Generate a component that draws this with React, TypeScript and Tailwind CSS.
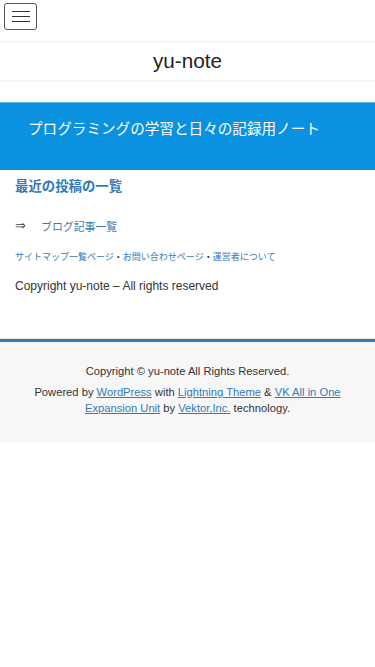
import React from "react";

const font = '"Liberation Sans", Arial, sans-serif';
const cjk = '"Noto Sans CJK JP", "Liberation Sans", sans-serif';

export default function App() {
  return (
    <div className="min-h-[667px] bg-white text-[#333]" style={{ fontFamily: font }}>
      {/* top bar with menu button */}
      <div className="h-[41px] pt-[3px] pl-[4px]">
        <button className="flex h-[27px] w-[33px] flex-col items-center justify-center gap-[4px] rounded-[3px] border border-[#555] bg-white">
          <span className="block h-px w-[18px] bg-[#333]" />
          <span className="block h-px w-[18px] bg-[#333]" />
          <span className="block h-px w-[18px] bg-[#333]" />
        </button>
      </div>

      {/* site header */}
      <header className="flex h-[39px] items-center justify-center border-t border-[#f0f0f0] bg-white shadow-[0_1px_2px_rgba(0,0,0,0.08)]">
        <div className="text-[20.7px] leading-none text-[#222]">yu-note</div>
      </header>

      <div className="h-[22px]" />

      {/* page header */}
      <div className="h-[68px] border-t border-[#5fb6ec] bg-[#0a92e1] pl-[28px] pt-[13px]">
        <h1
          className="text-[14.6px] leading-[24px] text-white"
          style={{ fontFamily: cjk }}
        >
          プログラミングの学習と日々の記録用ノート
        </h1>
      </div>

      {/* content */}
      <div className="px-[15px]">
        <h2
          className="h-[30px] text-[13.4px] font-bold leading-[30px] text-[#337ab7]"
          style={{ fontFamily: cjk }}
        >
          最近の投稿の一覧
        </h2>

        <p className="mt-[16px] flex h-[20px] items-center text-[12px]">
          <span className="inline-block w-[26px] text-[13px] text-[#444]" style={{ fontFamily: '"DejaVu Sans", sans-serif' }}>
            ⇒
          </span>
          <a className="text-[10.9px] text-[#337ab7]" style={{ fontFamily: cjk }}>
            ブログ記事一覧
          </a>
        </p>

        <p
          className="mt-[11px] h-[20px] whitespace-nowrap text-[9px] leading-[20px]"
          style={{ fontFamily: cjk }}
        >
          <a className="text-[#337ab7]">サイトマップ一覧ページ</a>
          <span className="text-[#333]">・</span>
          <a className="text-[#337ab7]">お問い合わせページ</a>
          <span className="text-[#333]">・</span>
          <a className="text-[#337ab7]">運営者について</a>
        </p>

        <p className="mt-[9px] h-[20px] text-[12px] leading-[20px] text-[#333]">
          Copyright yu-note – All rights reserved
        </p>
      </div>

      {/* footer */}
      <footer className="mt-[42px] border-t border-[#e5e5e5]">
        <div className="border-t-[3px] border-[#337ab7] bg-[#f7f7f7] px-[15px] pb-[27px] pt-[21px] text-center text-[11.2px] leading-[16px] text-[#333]">
          <p>Copyright © yu-note All Rights Reserved.</p>
          <p className="mt-[5px]">
            Powered by <a className="text-[#337ab7] underline">WordPress</a> with{" "}
            <a className="text-[#337ab7] underline">Lightning Theme</a> &amp;{" "}
            <a className="text-[#337ab7] underline">VK All in One</a>{" "}
            <a className="text-[#337ab7] underline">Expansion Unit</a> by{" "}
            <a className="text-[#337ab7] underline">Vektor,Inc.</a> technology.
          </p>
        </div>
      </footer>
    </div>
  );
}
